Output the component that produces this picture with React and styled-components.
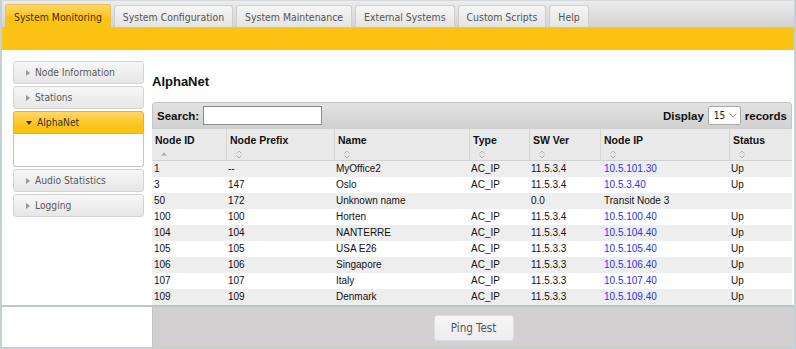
import React from 'react';
import styled, { createGlobalStyle } from 'styled-components';

const uiFont = `"DejaVu Sans Condensed", "DejaVu Sans", sans-serif`;

const GlobalStyle = createGlobalStyle`
  html, body {
    margin: 0;
    padding: 0;
    background: #fff;
  }
  body {
    font-family: "Liberation Sans", Arial, sans-serif;
  }
  * {
    box-sizing: border-box;
  }
`;

const Frame = styled.div`
  width: 796px;
  height: 349px;
  display: flex;
  flex-direction: column;
  border: 2px solid #c6cfd4;
  border-top: 1px solid #d3d9dc;
  overflow: hidden;
`;

const TabBar = styled.div`
  height: 27px;
  flex-shrink: 0;
  display: flex;
  align-items: flex-end;
  gap: 3px;
  padding-left: 3px;
  background: linear-gradient(#ececec, #d2d2d2);
  border-bottom: 1px solid #c4c4c4;
`;

const Tab = styled.div`
  height: ${p => (p.$active ? '24px' : '22px')};
  margin-bottom: ${p => (p.$active ? '-1px' : '0')};
  padding: 0 8px;
  display: flex;
  align-items: center;
  font-family: ${uiFont};
  font-stretch: condensed;
  font-size: 10.4px;
  color: ${p => (p.$active ? '#3a3000' : '#555')};
  background: ${p => (p.$active ? 'linear-gradient(#ffd766, #fcc214 60%)' : 'linear-gradient(#f6f6f6, #e3e3e3)')};
  border: 1px solid ${p => (p.$active ? '#e6c15a' : '#cfcfcf')};
  border-bottom: none;
  border-radius: 3px 3px 0 0;
  white-space: nowrap;
`;

const YellowBand = styled.div`
  height: 22px;
  flex-shrink: 0;
  background: #fcc214;
`;

const Body = styled.div`
  height: 255px;
  flex-shrink: 0;
  display: flex;
  overflow: hidden;
`;

const Sidebar = styled.div`
  width: 150px;
  flex-shrink: 0;
  padding: 11px 8px 0 11px;
  display: flex;
  flex-direction: column;
  gap: 2px;
`;

const MenuGroup = styled.div`
  display: flex;
  flex-direction: column;
`;

const MenuHeader = styled.div`
  height: 23px;
  display: flex;
  align-items: center;
  gap: 5px;
  padding-left: 12px;
  font-family: ${uiFont};
  font-stretch: condensed;
  font-size: 10.2px;
  color: ${p => (p.$open ? '#333' : '#5a5a5a')};
  background: ${p => (p.$open ? 'linear-gradient(#ffd766, #fcc214 70%)' : 'linear-gradient(#f7f7f7, #e6e6e6)')};
  border: 1px solid ${p => (p.$open ? '#e3b32a' : '#d3d3d3')};
  border-radius: ${p => (p.$open ? '3px 3px 0 0' : '3px')};
`;

const Arrow = styled.span`
  width: 0;
  height: 0;
  border-style: solid;
  border-color: transparent;
  ${p =>
    p.$open
      ? 'border-width: 4px 3.5px 0 3.5px; border-top-color: #333;'
      : 'border-width: 3.5px 0 3.5px 4px; border-left-color: #999;'}
`;

const MenuPanel = styled.div`
  height: 33px;
  background: #fff;
  border: 1px solid #c4c4c4;
  border-top: none;
  border-radius: 0 0 3px 3px;
`;

const Main = styled.div`
  flex: 1;
  min-width: 0;
  padding: 24px 2px 0 0;
  display: flex;
  flex-direction: column;
`;

const Heading = styled.h2`
  margin: 0 0 13px 0;
  font-size: 13px;
  line-height: 15px;
  font-weight: bold;
  color: #111;
`;

const Toolbar = styled.div`
  height: 28px;
  display: flex;
  align-items: center;
  justify-content: space-between;
  padding: 0 4px 0 4px;
  background: linear-gradient(#e2e2e2, #d0d0d0);
  border: 1px solid #c6c6c6;
  border-bottom: none;
  border-radius: 4px 4px 0 0;
`;

const ToolGroup = styled.label`
  display: flex;
  align-items: center;
  gap: 4px;
  font-size: 11.5px;
  font-weight: bold;
  color: #111;
`;

const SearchInput = styled.input`
  width: 119px;
  height: 19px;
  margin: 0;
  padding: 0 3px;
  border: 1px solid #8c8c8c;
  background: #fff;
  outline: none;
`;

const SelectBox = styled.div`
  width: 33px;
  height: 19px;
  display: flex;
  align-items: center;
  justify-content: space-between;
  padding: 0 3px 0 5px;
  background: #fff;
  border: 1px solid #a9a9a9;
  border-radius: 2px;
  font-family: ${uiFont};
  font-weight: normal;
  font-size: 10px;
  color: #222;
`;

const columns = '74px 108px 135px 60px 71px 129px 63px';

const HeaderRow = styled.div`
  display: grid;
  grid-template-columns: ${columns};
  height: 34px;
  background: #e9e9e9;
  border-bottom: 1px solid #d2d2d2;
`;

const HeaderCell = styled.div`
  display: flex;
  flex-direction: column;
  padding: 5px 0 0 3px;
  border-left: ${p => (p.$first ? 'none' : '1px solid #d6d6d6')};
  font-size: 10.5px;
  line-height: 13px;
  font-weight: bold;
  color: #111;
`;

const SortIcon = styled.svg`
  margin: 3px 0 0 5px;
  display: block;
`;

const Row = styled.div`
  display: grid;
  grid-template-columns: ${columns};
  height: 16px;
  line-height: 16px;
  font-size: 10px;
  color: #111;
  background: ${p => (p.$odd ? '#eeeeee' : '#fff')};
`;

const Cell = styled.div`
  padding-left: ${p => (p.$pad ? p.$pad : 2)}px;
  color: ${p => (p.$link ? '#2f2ff0' : 'inherit')};
  white-space: nowrap;
  overflow: hidden;
`;

const Divider = styled.div`
  height: 2px;
  flex-shrink: 0;
  background: #bcc6cb;
`;

const Footer = styled.div`
  flex: 1;
  display: flex;
`;

const FooterBlank = styled.div`
  width: 150px;
  background: #fff;
`;

const FooterBar = styled.div`
  flex: 1;
  display: flex;
  justify-content: center;
  padding-top: 8px;
  background: #d2d0d0;
  border-left: 1px solid #c2c2c2;
`;

const Button = styled.button`
  width: 80px;
  height: 26px;
  margin: 0;
  font-family: ${uiFont};
  font-stretch: condensed;
  font-size: 11.5px;
  color: #555;
  background: linear-gradient(#f6f6f6, #ececec);
  border: 1px solid #dedede;
  border-radius: 3px;
`;

const tabs = ['System Monitoring', 'System Configuration', 'System Maintenance', 'External Systems', 'Custom Scripts', 'Help'];

const menu = [
  { label: 'Node Information' },
  { label: 'Stations' },
  { label: 'AlphaNet', open: true },
  { label: 'Audio Statistics' },
  { label: 'Logging' },
];

const headers = ['Node ID', 'Node Prefix', 'Name', 'Type', 'SW Ver', 'Node IP', 'Status'];

const rows = [
  ['1', '--', 'MyOffice2', 'AC_IP', '11.5.3.4', '10.5.101.30', 'Up'],
  ['3', '147', 'Oslo', 'AC_IP', '11.5.3.4', '10.5.3.40', 'Up'],
  ['50', '172', 'Unknown name', '', '0.0', 'Transit Node 3', ''],
  ['100', '100', 'Horten', 'AC_IP', '11.5.3.4', '10.5.100.40', 'Up'],
  ['104', '104', 'NANTERRE', 'AC_IP', '11.5.3.4', '10.5.104.40', 'Up'],
  ['105', '105', 'USA E26', 'AC_IP', '11.5.3.3', '10.5.105.40', 'Up'],
  ['106', '106', 'Singapore', 'AC_IP', '11.5.3.3', '10.5.106.40', 'Up'],
  ['107', '107', 'Italy', 'AC_IP', '11.5.3.3', '10.5.107.40', 'Up'],
  ['109', '109', 'Denmark', 'AC_IP', '11.5.3.3', '10.5.109.40', 'Up'],
];

function SortArrows({ asc }) {
  if (asc) {
    return (
      <SortIcon width="8" height="9" viewBox="0 0 8 9">
        <path d="M1 5.5 L4 2.5 L7 5.5 Z" fill="#a8a8a8" />
      </SortIcon>
    );
  }
  return (
    <SortIcon width="8" height="9" viewBox="0 0 8 9">
      <path d="M1.5 3.5 L4 1 L6.5 3.5 M1.5 5.5 L4 8 L6.5 5.5" fill="none" stroke="#b4b4b4" strokeWidth="1" />
    </SortIcon>
  );
}

export default function App() {
  return (
    <>
      <GlobalStyle />
      <Frame>
        <TabBar>
          {tabs.map((t, i) => (
            <Tab key={t} $active={i === 0}>{t}</Tab>
          ))}
        </TabBar>
        <YellowBand />
        <Body>
          <Sidebar>
            {menu.map(m => (
              <MenuGroup key={m.label}>
                <MenuHeader $open={m.open}>
                  <Arrow $open={m.open} />
                  {m.label}
                </MenuHeader>
                {m.open && <MenuPanel />}
              </MenuGroup>
            ))}
          </Sidebar>
          <Main>
            <Heading>AlphaNet</Heading>
            <Toolbar>
              <ToolGroup>
                Search:
                <SearchInput type="text" />
              </ToolGroup>
              <ToolGroup>
                Display
                <SelectBox>
                  15
                  <svg width="8" height="5" viewBox="0 0 8 5">
                    <path d="M0.5 0.5 L4 4 L7.5 0.5" fill="none" stroke="#888" strokeWidth="1" />
                  </svg>
                </SelectBox>
                records
              </ToolGroup>
            </Toolbar>
            <HeaderRow>
              {headers.map((h, i) => (
                <HeaderCell key={h} $first={i === 0}>
                  {h}
                  <SortArrows asc={i === 0} />
                </HeaderCell>
              ))}
            </HeaderRow>
            {rows.map((r, i) => (
              <Row key={r[0]} $odd={i % 2 === 0}>
                {r.map((c, j) => (
                  <Cell key={j} $link={j === 5 && c.startsWith('10.')} $pad={j === 5 ? 4 : 2}>
                    {c}
                  </Cell>
                ))}
              </Row>
            ))}
          </Main>
        </Body>
        <Divider />
        <Footer>
          <FooterBlank />
          <FooterBar>
            <Button>Ping Test</Button>
          </FooterBar>
        </Footer>
      </Frame>
    </>
  );
}
